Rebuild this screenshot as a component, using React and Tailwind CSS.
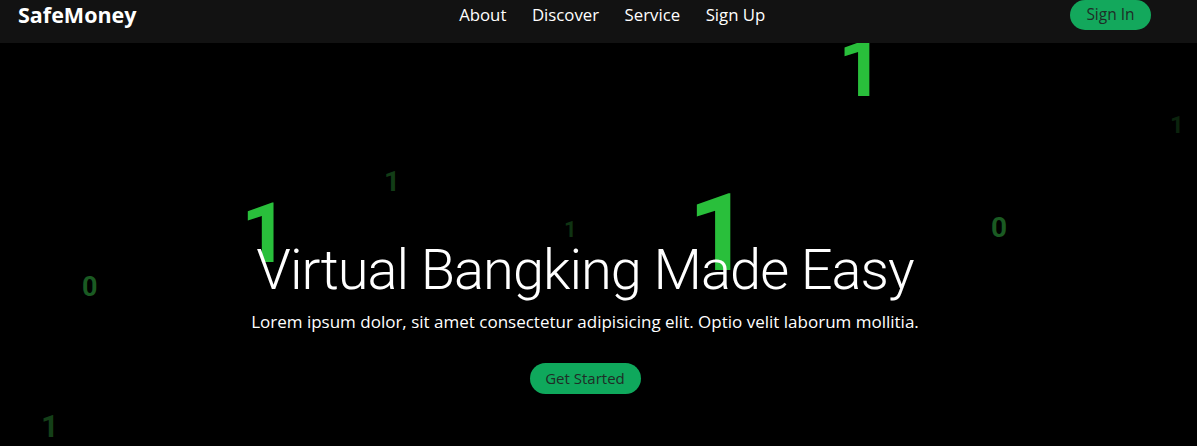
import React from "react";

// decorative binary digits floating over the hero
const digits = [
  { ch: "1", left: 838, top: -14, size: 80, color: "text-[#29bf3b]" },
  { ch: "1", left: 241, top: 149, size: 83, color: "text-[#29bf3b]" },
  { ch: "1", left: 688, top: 136, size: 108, color: "text-[#29bf3b]" },
  { ch: "1", left: 1170, top: 70, size: 24, color: "text-[#0b230d]" },
  { ch: "0", left: 991, top: 171, size: 28, color: "text-[#1a5a22]" },
  { ch: "1", left: 384, top: 125, size: 28, color: "text-[#123c16]" },
  { ch: "1", left: 564, top: 176, size: 22, color: "text-[#0f3312]" },
  { ch: "0", left: 82, top: 231, size: 27, color: "text-[#1a5a22]" },
  { ch: "1", left: 41, top: 368, size: 31, color: "text-[#143f18]" },
];

export default function App() {
  return (
    <div className="min-h-[446px] bg-black font-['Open_Sans',sans-serif] text-white">
      <nav className="relative z-20 flex h-[43px] items-start justify-between bg-[#121212] pl-[18px] pr-[46px]">
        <a className="mt-[0px] text-[21.5px] font-bold leading-[30px]">SafeMoney</a>
        <ul className="mt-[2px] flex gap-[25.5px] pl-[18px] text-[16.8px] leading-[26px]">
          <li>About</li>
          <li>Discover</li>
          <li>Service</li>
          <li>Sign Up</li>
        </ul>
        <button className="h-[30px] w-[81px] rounded-full bg-[#13a85c] text-[15.5px] text-[#1f2d27]">
          Sign In
        </button>
      </nav>

      <section className="relative h-[403px] overflow-hidden">
        {digits.map((d, i) => (
          <span
            key={i}
            className={`absolute font-['Roboto',sans-serif] font-bold leading-none ${d.color}`}
            style={{ left: d.left, top: d.top, fontSize: d.size }}
          >
            {d.ch}
          </span>
        ))}
        <div className="relative z-10 flex flex-col items-center pr-[27px] pt-[194px]">
          <h1 className="font-['Roboto',sans-serif] text-[56px] font-light leading-[66px] tracking-[-1px]">
            Virtual Bangking Made Easy
          </h1>
          <p className="mt-[6px] text-[17px] leading-[25px]">
            Lorem ipsum dolor, sit amet consectetur adipisicing elit. Optio velit laborum mollitia.
          </p>
          <button className="mt-[29px] h-[31px] w-[111px] rounded-full bg-[#0fa85c] text-[15px] text-[#1f2d27]">
            Get Started
          </button>
        </div>
      </section>
    </div>
  );
}
